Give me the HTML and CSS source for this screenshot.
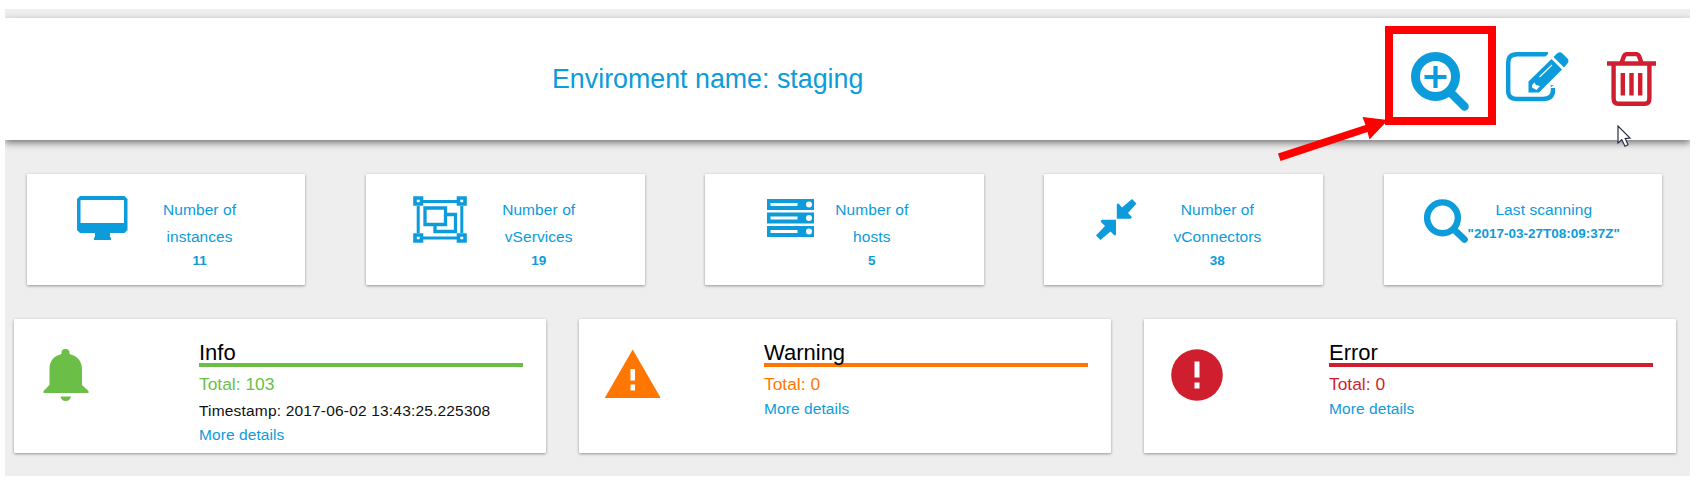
FILE: index.html
```html
<!DOCTYPE html>
<html lang="en">
<head>
<meta charset="utf-8">
<title>Environment dashboard</title>
<link rel="stylesheet" href="styles.css">
</head>
<body>
<main class="page">
  <header class="topbar">
    <h1 class="title">Enviroment name: staging</h1>
    <div class="actions">
      <span class="highlight">
        <svg class="act-zoom" width="59" height="60" viewBox="0 0 59 60" fill="none" stroke="#0c9bdb">
          <circle cx="24.5" cy="24.5" r="20" stroke-width="9"/>
          <path d="M40 41L53.500 54.500" stroke-width="8.500" stroke-linecap="round"/>
          <path d="M24.500 14V36M13.500 25H35.500" stroke-width="4.200"/>
        </svg>
      </span>
      <svg class="act-edit" width="63" height="50" viewBox="0 0 63 50">
        <path d="M42 2.200H11Q2.200 2.200 2.200 11V39Q2.200 47 11 47H37Q47 47 47 38V33" fill="none" stroke="#0c9bdb" stroke-width="4.400"/>
        <path d="M44 36L50 31V36Z" fill="#fff"/>
        <path d="M44 0H52L24 28H16Z" fill="#fff"/>
        <path d="M22.500 29.500L45.500 7L56 17.500L33 40.500H22.500Z" fill="#0c9bdb"/>
        <path d="M47.500 5L50.500 2Q53.500 -1 56.500 1.500L61 6Q64 9 61 12L58 15.500Z" fill="#0c9bdb"/>
        <path d="M26 33L28.500 30.500L30 33L34 34L30.500 38L26 35.500Z" fill="#fff"/>
        <path d="M33.500 25L46 13" stroke="#fff" stroke-width="1.100"/>
      </svg>
      <svg class="act-trash" width="49" height="55" viewBox="0 0 49 55" fill="none" stroke="#cf1f2e" stroke-width="4.400">
        <path d="M0 11.500H49M14.500 11L17 4Q18 2.100 20 2.100H29Q31 2.100 32 4L34.500 11"/>
        <path d="M6.600 11V46Q6.600 51.800 11 51.800H38Q42.400 51.800 42.400 46V11"/>
        <path d="M15.800 21V43.500M24.500 21V43.500M33.200 21V43.500"/>
      </svg>
    </div>
  </header>

  <section class="stats">
    <article class="card stat stat-instances">
      <svg width="51" height="45" viewBox="0 0 51 45">
        <path fill="#0c9bdb" fill-rule="evenodd" d="M3 0H47.500L50.500 3V34L47.500 37H33V40.500L34 42V44H17V42L18 40.500V37H3L0 34V3ZM3.500 4V27H47V4Z"/>
      </svg>
      <p class="label">Number of<br>instances<b>11</b></p>
    </article>
    <article class="card stat stat-services">
      <svg width="54" height="47" viewBox="0 0 54 47" fill="none" stroke="#0c9bdb" stroke-width="3">
        <path d="M10 5.500H44M10 42H44M5.200 10V37M48.800 10V37"/>
        <path d="M2 2H8.500V8H2ZM45.500 2H52V8H45.500ZM2 39H8.500V45H2ZM45.500 39H52V45H45.500Z" stroke-width="3.600"/>
        <path d="M12 12H32.500V28.500H12ZM33 18.500H42.500V35.500H22V29" stroke-width="3.300"/>
      </svg>
      <p class="label">Number of<br>vServices<b>19</b></p>
    </article>
    <article class="card stat stat-hosts">
      <svg width="47" height="38" viewBox="0 0 47 38">
        <path fill="#0c9bdb" d="M0 0H47V11H0ZM0 13.500H47V24.500H0ZM0 27H47V38H0Z"/>
        <path fill="#fff" d="M3.500 4H30.500V7H3.500ZM3.500 17.500H30.500V20.500H3.500ZM3.500 31H30.500V34H3.500Z"/>
        <g fill="#fff"><circle cx="42" cy="5.500" r="3"/><circle cx="42" cy="19" r="3"/><circle cx="42" cy="32.500" r="3"/></g>
      </svg>
      <p class="label">Number of<br>hosts<b>5</b></p>
    </article>
    <article class="card stat stat-connectors">
      <svg width="41" height="41" viewBox="0 0 41 41" fill="#0c9bdb">
        <path d="M20.800 5.500Q21.500 4 23 5L26 8.500L36 0L40.500 4.500L32 14L35.500 17.500Q36.500 19 34.500 19.800H20.800Z"/>
        <path d="M20 35.500Q19.500 37 18 36L14.500 32.500L4.500 41L0 36.500L9 27L5 23Q4 21.500 6 20.800H20Z"/>
      </svg>
      <p class="label">Number of<br>vConnectors<b>38</b></p>
    </article>
    <article class="card stat stat-scan">
      <svg width="44" height="44" viewBox="0 0 44 44" fill="none" stroke="#0c9bdb">
        <circle cx="18.500" cy="18.800" r="15.400" stroke-width="6.400"/>
        <path d="M30 30.500L40.500 40.500" stroke-width="6.600" stroke-linecap="round"/>
      </svg>
      <p class="label">Last scanning<b>"2017-03-27T08:09:37Z"</b></p>
    </article>
  </section>

  <section class="alerts">
    <article class="card alert info">
      <svg class="alert-icon" width="60" height="60" viewBox="0 0 60 60" fill="#6bbf47">
        <path d="M4.500 42L10.500 36V20Q10.500 8 22.500 5V3Q23 0 26.500 0T30.500 3V5Q42.500 8 43 20V36L49.500 42V44H4.500ZM21.500 47.500H32Q31 52 26.700 52T21.500 47.500Z"/>
      </svg>
      <div class="alert-body">
        <h2>Info</h2>
        <p class="total">Total: 103</p>
        <p class="time">Timestamp: 2017-06-02 13:43:25.225308</p>
        <a class="more">More details</a>
      </div>
    </article>
    <article class="card alert warning">
      <svg class="alert-icon" width="60" height="60" viewBox="0 0 60 60">
        <path fill="#ff7700" d="M.7 49L28.700 .5L56.700 49Z"/>
        <path fill="#fff" d="M26.500 20H31V31.500H26.500ZM26.500 35.500H31V41.500H26.500Z"/>
      </svg>
      <div class="alert-body">
        <h2>Warning</h2>
        <p class="total">Total: 0</p>
        <a class="more">More details</a>
      </div>
    </article>
    <article class="card alert error">
      <svg class="alert-icon" width="60" height="60" viewBox="0 0 60 60">
        <circle cx="28" cy="26" r="25.800" fill="#cf1f2e"/>
        <path fill="#fff" d="M25.500 12.500H30.500V28.500H25.500ZM25.500 33.500H30.500V39.500H25.500Z"/>
      </svg>
      <div class="alert-body">
        <h2>Error</h2>
        <p class="total">Total: 0</p>
        <a class="more">More details</a>
      </div>
    </article>
  </section>

  <svg class="arrow" width="112" height="46" viewBox="0 0 112 46" fill="#f00">
    <path d="M0 37.500L87.500 9L84.500 1L110 4L91.500 23.500L89.500 16L2.500 45Z"/>
  </svg>
  <svg class="pointer" width="15" height="23" viewBox="0 0 15 23">
    <path d="M1 1V18L4.800 14.800L8 21.300L11 19.800L8.200 13.600L13 13Z" fill="#fff" stroke="#2c2c44" stroke-width="1.200"/>
  </svg>
</main>
</body>
</html>
```

FILE: styles.css
```css
* { box-sizing: border-box; }

body {
  margin: 0;
  padding: 9px 6px 5px 5px;
  background: #fff;
  font-family: "Liberation Sans", Arial, sans-serif;
}

h1, h2, p { margin: 0; font-weight: 400; }
svg { display: block; flex: none; }

.page {
  position: relative;
  height: 467px;
  padding-top: 9px;
  background: #eee;
  overflow: hidden;
}

.topbar {
  display: flex;
  align-items: flex-start;
  justify-content: space-between;
  height: 122px;
  padding: 8px 34px 0 547px;
  background: #fff;
  box-shadow: 0 3px 7px rgba(0, 0, 0, .5);
}

.title {
  padding-top: 38px;
  color: #0c9bdb;
  font-size: 26.800px;
  line-height: 31px;
  white-space: nowrap;
}

.actions { display: flex; align-items: flex-start; }

.highlight {
  width: 111px;
  height: 99px;
  padding: 18px 0 0 18px;
  border: 8px solid #f00;
}

.act-edit { margin: 26px 0 0 10px; }
.act-trash { margin: 26px 0 0 38px; }

.stats {
  display: grid;
  grid-template-columns: repeat(5, 278.400px);
  justify-content: space-between;
  margin: 34px 28px 0 22px;
}

.card {
  display: flex;
  align-items: flex-start;
  background: #fff;
  border-radius: 1px;
  box-shadow: 0 1px 3px rgba(0, 0, 0, .38);
}

.stat {
  height: 111px;
  padding-top: 22px;
  color: #0c9bdb;
}

.label {
  font-size: 15.500px;
  letter-spacing: .08px;
  line-height: 27px;
  text-align: center;
  white-space: nowrap;
}

.label b {
  display: block;
  font-size: 13.500px;
  letter-spacing: 0;
  line-height: 21px;
}

.stat-instances { padding-left: 50px; gap: 35px; }
.stat-services { padding-left: 47px; gap: 35px; }
.stat-hosts { padding-left: 62px; gap: 21px; }
.stat-hosts svg, .stat-connectors svg, .stat-scan svg { margin-top: 3px; }
.stat-connectors { padding-left: 52px; gap: 36px; }
.stat-scan { padding-left: 40px; }

.alerts {
  display: grid;
  grid-template-columns: repeat(3, 1fr);
  gap: 33px;
  margin: 34px 14px 0 9px;
}

.alert { height: 134px; padding: 0 23px 0 25px; }
.alert-icon { margin: 30px 100px 0 0; }
.alert-body { flex: 1; padding-top: 23px; }

.info { --tone: #6bbf47; }
.warning { --tone: #ff7700; }
.error { --tone: #cf1f2e; }

.alert h2 {
  margin-bottom: 4px;
  border-bottom: 4px solid var(--tone);
  color: #000;
  font-size: 22px;
  line-height: 21px;
}

.total { color: var(--tone); font-size: 17.400px; line-height: 26px; }
.time, .more { font-size: 15.500px; letter-spacing: .08px; white-space: nowrap; }
.time { padding-top: 1px; color: #111; letter-spacing: .18px; line-height: 25px; }
.more { display: block; color: #0c9bdb; line-height: 23px; }

.arrow { position: absolute; left: 1273px; top: 107px; }
.pointer { position: absolute; left: 1612px; top: 116px; }
```
